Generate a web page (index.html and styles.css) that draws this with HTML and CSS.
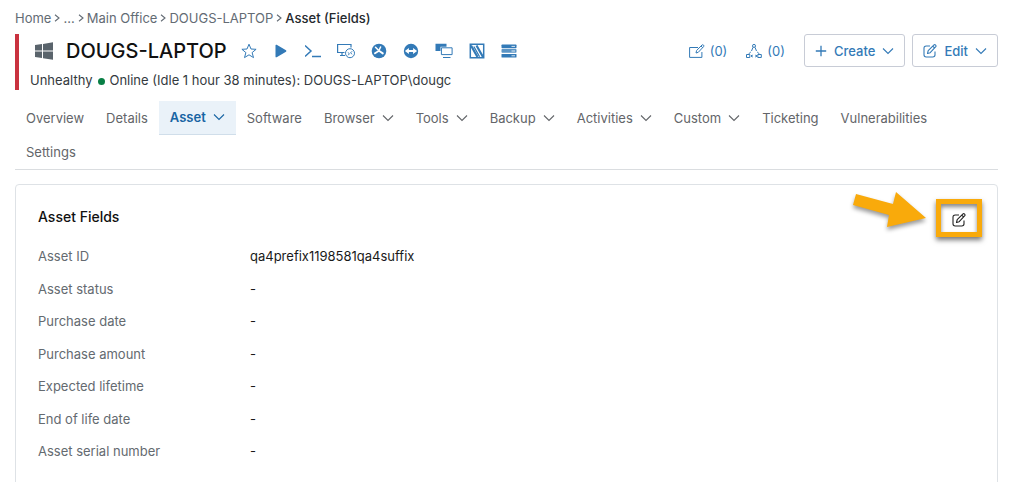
FILE: index.html
```html
<!DOCTYPE html>
<html lang="en">
<head>
<meta charset="utf-8">
<meta name="viewport" content="width=device-width, initial-scale=1">
<title>DOUGS-LAPTOP - Asset (Fields)</title>
<link rel="stylesheet" href="styles.css">
</head>
<body>
<svg class="defs" aria-hidden="true">
  <symbol id="chevron" viewBox="0 0 12 12"><path d="M1 3.5l5 5 5-5" fill="none" stroke="currentColor" stroke-width="1.1"/></symbol>
  <symbol id="crumb" viewBox="0 0 8 8"><path d="M2 .8l4 3.2-4 3.2" fill="none" stroke="currentColor" stroke-width="1.1"/></symbol>
  <symbol id="pencil-box" viewBox="0 0 14 14"><g fill="none" stroke="currentColor" stroke-width="1.1" stroke-linejoin="round"><path d="M7 2H3.2Q1 2 1 4.2v6.6Q1 13 3.200 13h6.600Q12 13 12 10.800V7.500"/><path d="M4.500 9.500l.7-2.800L11 .9q.8-.6 1.600.2t.2 1.600L7.200 8.700zM9.800 2.200l1.900 1.900"/></g></symbol>
</svg>
<div class="page">
  <nav class="crumbs" aria-label="Breadcrumb">
    <a href="#">Home</a><svg class="crumb-sep"><use href="#crumb"/></svg>
    <a href="#">...</a><svg class="crumb-sep"><use href="#crumb"/></svg>
    <a href="#">Main Office</a><svg class="crumb-sep"><use href="#crumb"/></svg>
    <a href="#">DOUGS-LAPTOP</a><svg class="crumb-sep"><use href="#crumb"/></svg>
    <span class="crumb-current">Asset (Fields)</span>
  </nav>

  <header class="device">
    <div class="device-row">
      <svg class="os" viewBox="0 0 18 18" fill="#5a646c"><path d="M0 3l7-1v6.500H0zM8 1.900L18 .2v8.300H8zM0 9.500h7V16l-7-1zM8 9.500h10v8.300L8 16.200z"/></svg>
      <h1 class="device-name">DOUGS-LAPTOP</h1>
      <div class="tools">
        <button class="tool" aria-label="Favorite"><svg viewBox="0 0 16 16"><path d="M8 1.200l2 4.800 5.100.3-4 3.300 1.400 5L8 11.800l-4.500 2.800 1.400-5-4-3.300L6 6z" fill="none" stroke="currentColor" stroke-linejoin="round"/></svg></button>
        <button class="tool" aria-label="Run"><svg viewBox="0 0 16 16"><path d="M2.500 2.500q0-1.200 1.200-.7l9.300 5.500q.9.700 0 1.400l-9.300 5.500q-1.200.5-1.200-.7z" fill="currentColor"/></svg></button>
        <button class="tool" aria-label="Terminal"><svg viewBox="0 0 16 16"><path d="M0 2.500L6 8l-6 5.500M7 13.500h9" fill="none" stroke="currentColor" stroke-width="1.500"/></svg></button>
        <button class="tool tool-wide" aria-label="Remote desktop"><svg viewBox="0 0 18 16"><path d="M7.500 9.500H.6v-8H14v3M5 9.500v3M3 12.500h5" fill="none" stroke="currentColor" stroke-width="1.200"/><circle cx="13" cy="10.200" r="4.500" fill="#fff" stroke="currentColor"/><path d="M10.800 9.500l1.600 1.200-1.300 1.600M15.200 8.200l-1.700 1.700 1.700 1.300" fill="none" stroke="currentColor" stroke-width=".9"/></svg></button>
        <button class="tool" aria-label="Splashtop"><svg viewBox="0 0 16 16"><circle cx="8" cy="8" r="7.300" fill="currentColor"/><g fill="none" stroke="#fff" stroke-linecap="round"><path d="M4.500 4.200L7 6.800M9.600 4L8.300 6.800" stroke-width="1.500"/><path d="M4 10.200l4-2.400 3.800 2.600" stroke-width="1.900"/></g></svg></button>
        <button class="tool" aria-label="TeamViewer"><svg viewBox="0 0 16 16"><circle cx="8" cy="8" r="7.200" fill="currentColor"/><path d="M1.900 8l4-3v2h4.200V5l4 3-4 3V9H5.900v2z" fill="#fff"/></svg></button>
        <button class="tool tool-wide" aria-label="Screens"><svg viewBox="0 0 18 16"><path d="M.5.800h11v3h-6V8h-5z" fill="currentColor"/><path d="M6.400 4.800h10.700v6.800H6.400z" fill="#fff" stroke="currentColor"/><path d="M8 14.500h7.500" stroke="currentColor"/></svg></button>
        <button class="tool" aria-label="Remote control"><svg viewBox="0 0 16 16"><g fill="none" stroke="currentColor"><path d="M1.300 1.300h13.400v13.400H1.300z" stroke-width="1.500"/><path d="M2 2.500l6.500 11.500M7.500 2.500l6.500 11.500" stroke-width="2.200"/><path d="M4.800 3.500l5.800 10.200" stroke-width="1.300"/></g></svg></button>
        <button class="tool" aria-label="Server"><svg viewBox="0 0 16 16"><rect x=".5" y="1.500" width="15" height="3.700" rx=".7" fill="currentColor"/><rect x=".5" y="6" width="15" height="3.700" rx=".7" fill="currentColor" opacity=".8"/><rect x=".5" y="10.900" width="15" height="3.700" rx=".7" fill="currentColor"/><path d="M10.500 3.400H14M10.500 8H14M10.500 12.800H14" stroke="#fff" stroke-width=".8"/></svg></button>
      </div>
      <div class="actions">
        <a class="counter" href="#"><svg class="counter-icon" viewBox="0 0 16 14"><g fill="none" stroke="currentColor"><path d="M9 3.500H.6v9.900h12.300V8"/><path d="M7 9l.6-2.500L13 1q.8-.6 1.500.1t.1 1.500L9.300 8.300zM12 2l1.700 1.700"/></g></svg>(0)</a>
        <a class="counter" href="#"><svg class="counter-icon" viewBox="0 0 16 14"><g fill="none" stroke="currentColor"><circle cx="8" cy="1.900" r="1.500"/><path d="M7 3.300L5.500 7M4.800 8L2.500 10M9 3.300L10.500 7M11.200 8l2.300 2M5 12h2M9 12h2"/><path d="M.5 10.500h3.300v3H.5zM11.800 10.500h3.500v3h-3.500zM6.300 10.800l-1.200 1.200 1.200 1.200M9.700 10.800l1.200 1.200-1.200 1.200"/></g></svg>(0)</a>
        <button class="button"><svg class="icon-small" viewBox="0 0 12 12"><path d="M6 .8v10.400M.8 6h10.400" stroke="currentColor" stroke-width="1.300"/></svg>Create<svg class="icon-small"><use href="#chevron"/></svg></button>
        <button class="button"><svg class="icon-edit"><use href="#pencil-box"/></svg>Edit<svg class="icon-small"><use href="#chevron"/></svg></button>
      </div>
    </div>
    <p class="status"><span>Unhealthy</span><span class="dot"></span><span>Online (Idle 1 hour 38 minutes): DOUGS-LAPTOP\dougc</span></p>
  </header>

  <nav class="tabs" aria-label="Device">
    <a class="tab" href="#">Overview</a>
    <a class="tab" href="#">Details</a>
    <a class="tab tab-active" href="#" aria-current="page">Asset<svg class="icon-small"><use href="#chevron"/></svg></a>
    <a class="tab" href="#">Software</a>
    <a class="tab" href="#">Browser<svg class="icon-small"><use href="#chevron"/></svg></a>
    <a class="tab" href="#">Tools<svg class="icon-small"><use href="#chevron"/></svg></a>
    <a class="tab" href="#">Backup<svg class="icon-small"><use href="#chevron"/></svg></a>
    <a class="tab" href="#">Activities<svg class="icon-small"><use href="#chevron"/></svg></a>
    <a class="tab" href="#">Custom<svg class="icon-small"><use href="#chevron"/></svg></a>
    <a class="tab" href="#">Ticketing</a>
    <a class="tab" href="#">Vulnerabilities</a>
    <a class="tab" href="#">Settings</a>
  </nav>

  <section class="card">
    <div class="card-head">
      <h2 class="card-title">Asset Fields</h2>
      <button class="edit-fields" aria-label="Edit asset fields"><svg class="icon-edit"><use href="#pencil-box"/></svg></button>
    </div>
    <dl class="fields">
      <dt>Asset ID</dt><dd>qa4prefix1198581qa4suffix</dd>
      <dt>Asset status</dt><dd>-</dd>
      <dt>Purchase date</dt><dd>-</dd>
      <dt>Purchase amount</dt><dd>-</dd>
      <dt>Expected lifetime</dt><dd>-</dd>
      <dt>End of life date</dt><dd>-</dd>
      <dt>Asset serial number</dt><dd>-</dd>
    </dl>
    <svg class="pointer" viewBox="0 0 76 38" aria-hidden="true"><path d="M4 2l37 10 3-12 30 26-39 9 2-12L1 13z" fill="#f9aa0b"/></svg>
  </section>
</div>
</body>
</html>
```
FILE: styles.css
```css
* { box-sizing: border-box; }

body {
  margin: 0;
  background: #fff;
  color: #343a40;
  font: 13px/20px Inter, "Liberation Sans", sans-serif;
}

a { color: inherit; text-decoration: none; }
button { font: inherit; cursor: pointer; }
svg { flex: none; }
.defs { position: absolute; width: 0; height: 0; }
.page { padding: 8px 12px 0 15px; }

.crumbs {
  display: flex;
  align-items: center;
  color: #636b74;
}
.crumb-sep { width: 8px; height: 8px; margin: 0 2px; }
.crumb-current { color: #24292e; font-weight: 500; }

.device {
  margin-top: 6px;
  padding-left: 11px;
  border-left: 4px solid #c9323f;
}
.device-row {
  display: flex;
  align-items: center;
  height: 34px;
  padding-left: 5px;
}
.os { width: 18px; height: 18px; margin-right: 13px; }
.device-name {
  margin: 0;
  color: #111;
  font-size: 20px;
  font-weight: 500;
  white-space: nowrap;
}
.tools {
  display: flex;
  gap: 16px;
  margin-left: 14px;
  color: #337ab7;
}
.tool {
  display: flex;
  padding: 0;
  border: 0;
  background: none;
  color: inherit;
}
.tool svg { width: 16px; height: 16px; }
.tool-wide svg { width: 18px; }

.actions {
  display: flex;
  align-items: center;
  align-self: flex-start;
  margin-left: auto;
  color: #337ab7;
}
.counter { display: flex; align-items: center; gap: 5px; margin-right: 19px; }
.counter-icon { width: 16px; height: 14px; }
.button {
  display: flex;
  align-items: center;
  gap: 7px;
  height: 33px;
  padding: 0 10px;
  border: 1px solid #c8ccd6;
  border-radius: 3px;
  background: #fff;
  color: inherit;
  font-weight: 500;
}
.button + .button { margin-left: 7px; }
.icon-small { width: 12px; height: 12px; }
.icon-edit { width: 14px; height: 14px; }

.status {
  display: flex;
  align-items: center;
  margin: 0;
  padding: 2px 0 0;
}
.dot {
  width: 7px;
  height: 7px;
  margin: 2px 4px 0 6px;
  border-radius: 50%;
  background: #087f45;
}

.tabs {
  display: flex;
  flex-wrap: wrap;
  margin-top: 11px;
  border-bottom: 1px solid #dadde0;
  color: #636569;
}
.tab {
  display: flex;
  align-items: center;
  gap: 7px;
  height: 34px;
  padding: 0 11px 1px;
}
.tab-active {
  border-bottom: 1px solid #d0deea;
  background: #eaf2f9;
  color: #1764a3;
  font-weight: 600;
}

.card {
  position: relative;
  margin-top: 14px;
  padding: 19px 22px 40px;
  border: 1px solid #dee2e6;
  border-radius: 4px;
}
.card-head {
  display: flex;
  align-items: center;
  justify-content: space-between;
  height: 26px;
}
.card-title {
  margin: 0;
  color: #111;
  font-size: 14px;
  font-weight: 500;
}
.edit-fields {
  display: flex;
  align-items: center;
  justify-content: center;
  width: 46px;
  height: 38px;
  margin: 2px -7px 0 0;
  padding: 4px 0 0;
  border: 5px solid #f9aa0b;
  background: #fff;
  box-shadow: 0 3px 5px #777, inset 0 3px 4px #888;
  color: #222;
}
.fields {
  display: grid;
  grid-template-columns: 212px 1fr;
  row-gap: 13px;
  margin: 17px 0 0;
  line-height: 1.5;
  color: #646a70;
}
.fields dd { margin: 0; color: #1a1a1a; }

.pointer {
  position: absolute;
  top: 7px;
  right: 69px;
  width: 76px;
  height: 38px;
  overflow: visible;
  filter: drop-shadow(0 3px 2px #999);
}
```
